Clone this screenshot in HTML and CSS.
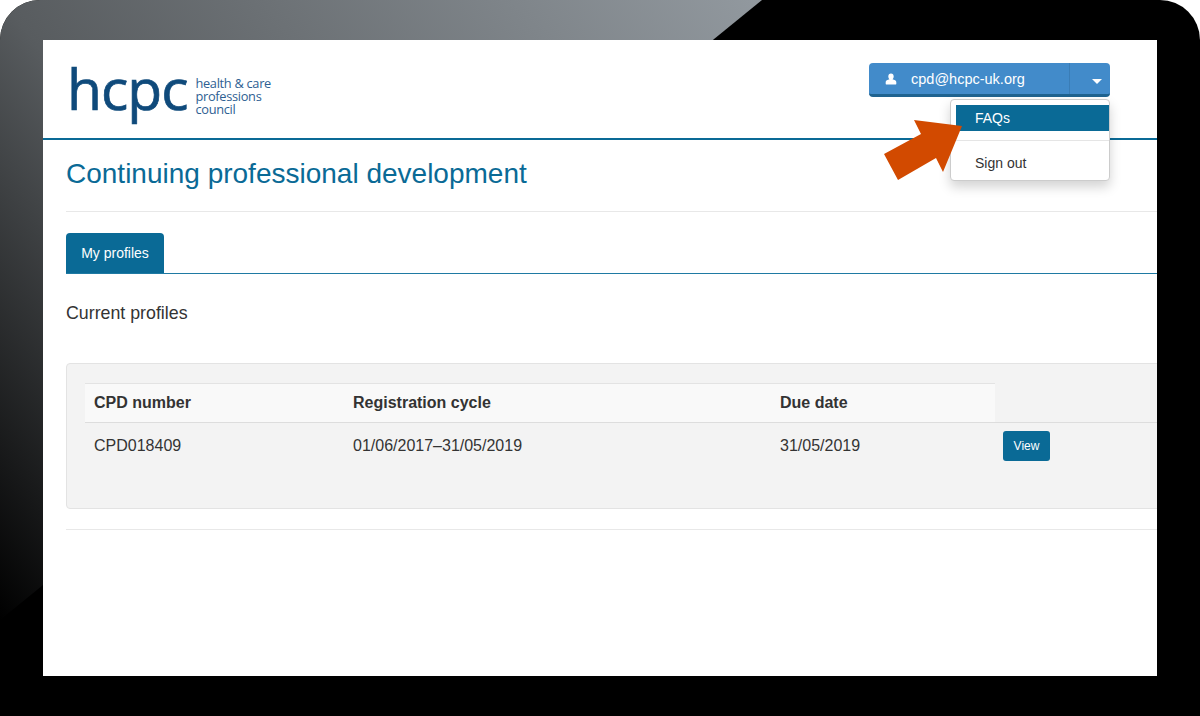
FILE: index.html
```html
<!DOCTYPE html>
<html lang="en">
<head>
<meta charset="utf-8">
<title>Continuing professional development</title>
<link rel="stylesheet" href="styles.css">
</head>
<body>
<div class="frame">
  <main class="screen">
    <header class="masthead">
      <div class="logo">
        <span class="logo-mark">hcpc</span>
        <span class="logo-text">health &amp; care<br>professions<br>council</span>
      </div>
      <div class="account">
        <div class="account-btn">
          <span class="account-main">
            <svg class="user-icon" viewBox="0 0 12 12" aria-hidden="true"><path d="M6 .5c1.7 0 2.7 1.3 2.7 2.9 0 1.2-.5 2.2-1.2 2.8 2 .4 3.8 1.3 3.8 2.9v1.9c0 .3-.2.5-.5.5h-9.600c-.3 0-.5-.2-.5-.5V9.100c0-1.600 1.800-2.500 3.800-2.900-.7-.6-1.200-1.600-1.200-2.800C3.300 1.800 4.300.5 6 .5z"/></svg>
            <span>cpd@hcpc-uk.org</span>
          </span>
          <span class="account-caret"><i class="caret"></i></span>
        </div>
        <ul class="menu">
          <li class="menu-item active">FAQs</li>
          <li class="menu-sep"></li>
          <li class="menu-item">Sign out</li>
        </ul>
      </div>
    </header>
    <div class="content">
      <h1 class="title">Continuing professional development</h1>
      <hr class="rule">
      <nav class="tabs"><span class="tab">My profiles</span></nav>
      <h2 class="subhead">Current profiles</h2>
      <section class="panel">
        <table class="table">
          <thead>
            <tr><th class="c1">CPD number</th><th class="c2">Registration cycle</th><th class="c3">Due date</th><td class="c4"></td></tr>
          </thead>
          <tbody>
            <tr><td>CPD018409</td><td>01/06/2017–31/05/2019</td><td>31/05/2019</td><td class="action"><span class="btn">View</span></td></tr>
          </tbody>
        </table>
      </section>
      <hr class="rule end">
    </div>
  </main>
  <svg class="arrow" viewBox="0 0 78 60" aria-hidden="true"><path d="M0 34 L37 14 L30 0 L78 6 L59 52 L52 38 L14 60 Z"/></svg>
</div>
</body>
</html>
```
FILE: styles.css
```css
* { box-sizing: border-box; }
html, body { margin: 0; padding: 0; background: #fff; }
body { width: 1200px; height: 716px; overflow: hidden; font-family: "Liberation Sans", Arial, sans-serif; color: #333; }

.frame {
  position: relative;
  width: 1200px;
  height: 716px;
  padding: 40px 43px;
  background: #000;
  border-radius: 40px 40px 0 0;
  overflow: hidden;
}
.frame::before {
  content: "";
  position: absolute;
  left: 0;
  top: 0;
  width: 762px;
  height: 620px;
  clip-path: polygon(0 0, 100% 0, 0 100%);
  background: linear-gradient(52deg, #000 0%, #585c5f 39%, #92999f 100%);
}

.screen {
  position: relative;
  width: 1114px;
  height: 636px;
  background: #fff;
  overflow: hidden;
}

.masthead {
  display: flex;
  justify-content: space-between;
  height: 100px;
  padding: 23px 47px 0 24px;
  border-bottom: 2px solid #0a6a96;
}
.logo { display: flex; align-items: flex-start; height: 64px; }
.logo-mark { font: 400 57px/50px "Open Sans", sans-serif; letter-spacing: -1px; color: #0f4a7b; -webkit-text-stroke: .7px #0f4a7b; }
.logo-text { font: 400 12.800px/13px "Open Sans", sans-serif; color: #2e6092; margin: 14px 0 0 8px; letter-spacing: -.3px; }

.account { position: relative; width: 241px; }
.account-btn {
  display: flex;
  height: 34px;
  background: #428bca;
  border-bottom: 3px solid #1f6390;
  border-radius: 4px;
  color: #fff;
  font-size: 14.500px;
}
.account-main { flex: 1; display: flex; align-items: center; gap: 14px; padding-left: 16px; border-right: 1px solid #3a7db6; }
.user-icon { width: 12px; height: 12px; fill: #fff; }
.account-caret { width: 40px; display: flex; align-items: center; justify-content: center; padding-left: 14px; }
.caret { display: block; margin-top: 6px; border: 5px solid transparent; border-top-color: #fff; border-bottom: 0; }

.menu {
  position: absolute;
  right: 0;
  top: 36px;
  width: 160px;
  height: 82px;
  margin: 0;
  padding: 5px 0 0 5px;
  list-style: none;
  background: #fff;
  border: 1px solid #ccc;
  border-radius: 4px;
  box-shadow: 0 6px 12px rgba(0,0,0,.175);
  font-size: 14px;
  color: #333;
}
.menu-item { height: 26px; line-height: 26px; padding-left: 19px; }
.menu-item.active { background: #0a6a96; color: #fff; }
.menu-sep { height: 1px; margin: 9px 0 9px -5px; background: #e5e5e5; }

.content { padding: 0 0 0 23px; }
.title { margin: 0; padding-top: 16px; height: 71px; font: 400 28px/36px "Liberation Sans", sans-serif; color: #0a6a96; }
.rule { margin: 0; height: 1px; border: 0; background: #e8e8e8; }
.tabs { margin-top: 21px; height: 41px; border-bottom: 1px solid #1f7aa3; }
.tab {
  display: block;
  width: 98px;
  height: 40px;
  line-height: 40px;
  text-align: center;
  background: #0a6a96;
  color: #fff;
  font-size: 14px;
  border-radius: 4px 4px 0 0;
}
.subhead { margin: 27px 0 0; height: 62px; font: 400 17.800px/24px "Liberation Sans", sans-serif; color: #333; }
.panel {
  width: 1120px;
  height: 146px;
  padding: 19px 0 0 18px;
  background: #f3f3f3;
  border: 1px solid #e3e3e3;
  border-radius: 4px;
}
.table { width: 1101px; table-layout: fixed; border-collapse: collapse; font-size: 16px; color: #333; }
.table th, .table td { padding: 0 0 0 9px; text-align: left; }
.table thead tr { height: 39px; }
.table th { background: #f9f9f9; border-top: 1px solid #e3e3e3; border-bottom: 1px solid #ddd; font-weight: 700; }
.table .c4 { background: transparent; border-bottom: 1px solid #ddd; }
.c1 { width: 259px; }
.c2 { width: 427px; }
.c3 { width: 224px; }
.table tbody tr { height: 46px; }
.table .action { vertical-align: top; padding: 8px 0 0 8px; }
.btn {
  display: block;
  width: 47px;
  height: 30px;
  line-height: 30px;
  text-align: center;
  font-size: 12px;
  background: #0a6a96;
  color: #fff;
  border-radius: 3px;
}
.end { margin-top: 20px; }

.arrow { position: absolute; left: 884px; top: 120px; width: 78px; height: 60px; fill: #d24a00; }
```
